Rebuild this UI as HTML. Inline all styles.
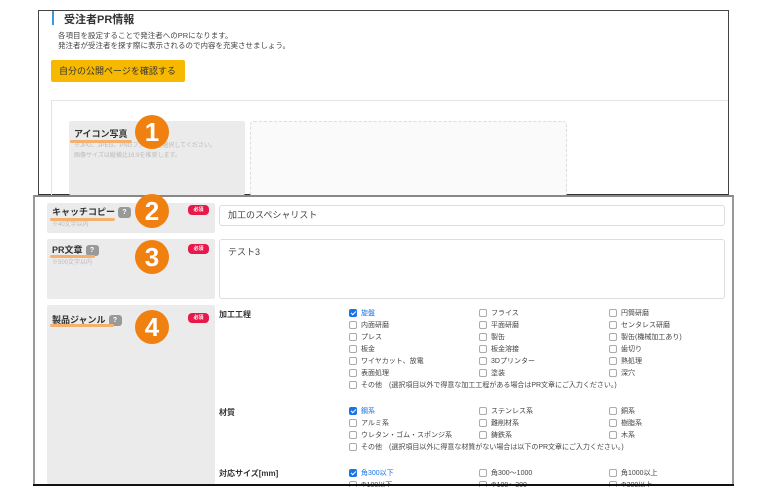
<!DOCTYPE html>
<html><head><meta charset="utf-8"><style>
*{margin:0;padding:0;box-sizing:border-box}
body{width:770px;height:500px;background:#fff;position:relative;overflow:hidden;font-family:"Liberation Sans","Noto Sans CJK JP",sans-serif;color:#333}
.a{position:absolute}
.t{font-size:7px;color:#444;white-space:nowrap}
.cb{position:absolute;width:8px;height:8px;border:1px solid #aaa;border-radius:2px;background:#fff}
.cb.on{background:#1a73e8;border-color:#1a73e8}
.cb.on:after{content:"";position:absolute;left:2px;top:0px;width:2px;height:4px;border:solid #fff;border-width:0 1px 1px 0;transform:rotate(45deg)}
.lbl{position:absolute;font-size:7px;color:#444;white-space:nowrap}
.lbl.on{color:#1a73e8}
.circ{position:absolute;width:34px;height:34px;border-radius:50%;background:#f08010;color:#fff;font-weight:bold;font-size:26px;line-height:34px;text-align:center}
.ul{position:absolute;height:3px;background:#f5b070;border-radius:2px}
.req{position:absolute;width:21px;height:10px;background:#e8194a;border-radius:4px;color:#fff;font-size:5px;line-height:10px;text-align:center;font-weight:bold}
.q{display:inline-block;width:13px;height:11px;background:#999;border-radius:3px;color:#fff;font-size:7px;line-height:11px;text-align:center;vertical-align:middle;margin-left:3px}
.gl{position:absolute;background:#ebebeb;border-radius:2px}
.bl{font-size:9px;font-weight:bold;color:#333;white-space:nowrap}
</style></head><body>
<div class="a" style="left:38px;top:10px;width:691px;height:186px;border:1px solid #444;border-bottom:2px solid #333;background:#fff"></div>
<div class="a" style="left:52px;top:11px;width:2px;height:14px;background:#3a9ad9"></div>
<div class="a" style="left:64px;top:11px;font-size:11px;font-weight:bold;color:#333">受注者PR情報</div>
<div class="a t" style="left:58px;top:30px;font-size:7.5px">各項目を設定することで発注者へのPRになります。</div>
<div class="a t" style="left:58px;top:40px;font-size:7.5px">発注者が受注者を探す際に表示されるので内容を充実させましょう。</div>
<div class="a" style="left:51px;top:60px;width:134px;height:22px;background:#f7b900;border-radius:2px;font-size:9px;line-height:22px;padding-left:8px;color:#333">自分の公開ページを確認する</div>
<div class="a" style="left:51px;top:100px;width:677px;height:95px;border-top:1px solid #e4e4e4;border-left:1px solid #e4e4e4"></div>
<div class="gl" style="left:69px;top:121px;width:176px;height:74px"></div>
<div class="a bl" style="left:74px;top:127px">アイコン写真</div>
<div class="a t" style="left:74px;top:140px;color:#bbb;font-size:6px">※JPG、JPEG、PNGファイルを選択してください。</div>
<div class="a t" style="left:74px;top:150px;color:#bbb;font-size:6px">画像サイズは縦横比16:9を推奨します。</div>
<div class="a" style="left:250px;top:121px;width:317px;height:76px;border:1px dashed #ddd;border-radius:4px;background:#fafafa"></div>
<div class="ul" style="left:70px;top:140px;width:62px"></div>
<div class="circ" style="left:135px;top:115px">1</div>
<div class="a" style="left:33px;top:195px;width:701px;height:291px;border:2px solid #999;border-top:2px solid #888;border-bottom:2px solid #111;background:#fff"></div>
<div class="gl" style="left:47px;top:203px;width:168px;height:30px"></div>
<div class="gl" style="left:47px;top:239px;width:168px;height:60px"></div>
<div class="gl" style="left:47px;top:305px;width:168px;height:179px"></div>
<div class="a bl" style="left:52px;top:205px">キャッチコピー<span class="q">?</span></div>
<div class="a t" style="left:52px;top:219px;color:#bbb;font-size:6px">※40文字以内</div>
<div class="a bl" style="left:52px;top:243px">PR文章<span class="q">?</span></div>
<div class="a t" style="left:52px;top:257px;color:#bbb;font-size:6px">※500文字以内</div>
<div class="a bl" style="left:52px;top:313px">製品ジャンル<span class="q">?</span></div>
<div class="ul" style="left:50px;top:218px;width:65px"></div>
<div class="ul" style="left:50px;top:255px;width:45px"></div>
<div class="ul" style="left:50px;top:324px;width:64px"></div>
<div class="circ" style="left:135px;top:194px">2</div>
<div class="circ" style="left:135px;top:240px">3</div>
<div class="circ" style="left:135px;top:310px">4</div>
<div class="req" style="left:188px;top:205px">必須</div>
<div class="req" style="left:188px;top:244px">必須</div>
<div class="req" style="left:188px;top:313px">必須</div>
<div class="a" style="left:219px;top:205px;width:506px;height:21px;border:1px solid #ddd;border-radius:3px;font-size:9px;line-height:19px;padding-left:8px;color:#444">加工のスペシャリスト</div>
<div class="a" style="left:219px;top:239px;width:506px;height:60px;border:1px solid #ddd;border-radius:3px;font-size:9px;padding:5px 8px;color:#444">テスト3</div>
<div class="a bl" style="left:219px;top:309px;font-size:8px">加工工程</div>
<div class="a bl" style="left:219px;top:407px;font-size:8px">材質</div>
<div class="a bl" style="left:219px;top:468px;font-size:8px">対応サイズ[mm]</div>
<div id="cbs"></div>
<script>
var d=[
[313,[["旋盤",1],["フライス"],["円筒研磨"]]],
[325,[["内面研磨"],["平面研磨"],["センタレス研磨"]]],
[337,[["プレス"],["製缶"],["製缶(機械加工あり)"]]],
[349,[["板金"],["板金溶接"],["歯切り"]]],
[361,[["ワイヤカット、放電"],["3Dプリンター"],["熱処理"]]],
[373,[["表面処理"],["塗装"],["深穴"]]],
[385,[["その他　(選択項目以外で得意な加工工程がある場合はPR文章にご入力ください。)"]]],
[411,[["鋼系",1],["ステンレス系"],["銅系"]]],
[423,[["アルミ系"],["難削材系"],["樹脂系"]]],
[435,[["ウレタン・ゴム・スポンジ系"],["鋳鉄系"],["木系"]]],
[447,[["その他　(選択項目以外に得意な材質がない場合は以下のPR文章にご入力ください。)"]]],
[473,[["角300以下",1],["角300～1000"],["角1000以上"]]],
[485,[["Φ100以下"],["Φ100～300"],["Φ300以上"]]]
];
var xs=[349,479,609],h="";
d.forEach(function(r){r[1].forEach(function(c,i){var on=c[1]?" on":"";
h+='<div class="cb'+on+'" style="left:'+xs[i]+'px;top:'+(r[0]-4)+'px"></div><div class="lbl'+on+'" style="left:'+(xs[i]+12)+'px;top:'+(r[0]-5)+'px">'+c[0]+'</div>';});});
document.getElementById("cbs").innerHTML=h;
</script>
<div class="a" style="left:0;top:487px;width:770px;height:13px;background:#fff"></div>
<div class="a" style="left:33px;top:484px;width:701px;height:2px;background:#111"></div>
</body></html>
